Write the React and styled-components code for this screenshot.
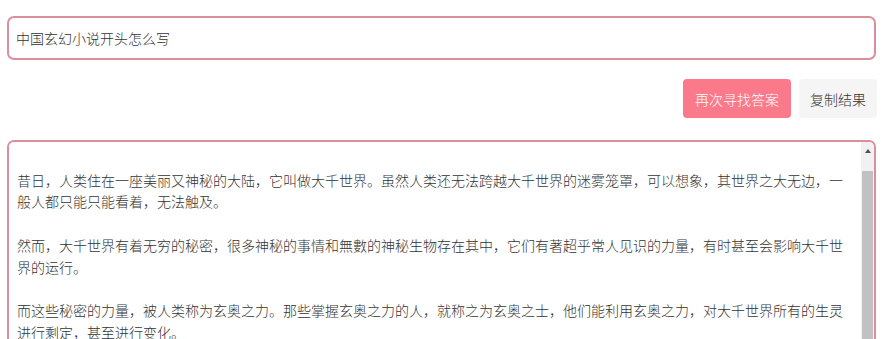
import React from "react";
import styled, { createGlobalStyle } from "styled-components";

const GlobalStyle = createGlobalStyle`
  html, body {
    margin: 0;
    padding: 0;
    background: #ffffff;
    overflow: hidden;
  }
  body {
    font-family: "Noto Sans CJK SC", "Noto Sans", sans-serif;
    color: #333333;
  }
`;

const Page = styled.div`
  display: flex;
  flex-direction: column;
  padding: 16px 15px 0 7px;
`;

const QuestionInput = styled.input`
  box-sizing: border-box;
  width: 100%;
  height: 44px;
  padding: 0 7px;
  border: 2px solid #dc8f9b;
  border-radius: 7px;
  outline: none;
  font-family: "Noto Sans CJK SC", sans-serif;
  font-size: 14px;
  font-weight: 300;
  color: #333333;
  background: #ffffff;
`;

const Actions = styled.div`
  display: flex;
  justify-content: flex-end;
  gap: 8px;
  margin-top: 19px;
  margin-right: -1px;
`;

const Button = styled.button`
  box-sizing: border-box;
  height: 39px;
  border: none;
  border-radius: 4px;
  font-family: "Noto Sans CJK SC", sans-serif;
  font-size: 14px;
  font-weight: 300;
  cursor: pointer;
  background: ${(p) => (p.$primary ? "#fa7a8b" : "#f5f5f5")};
  color: ${(p) => (p.$primary ? "#ffffff" : "#333333")};
  padding: ${(p) => (p.$primary ? "0 12px" : "0 11px")};
`;

const AnswerBox = styled.div`
  display: flex;
  height: 260px;
  margin-top: 22px;
  border: 2px solid #dc8f9b;
  border-radius: 7px;
  overflow: hidden;
  background: #ffffff;
`;

const Answer = styled.textarea`
  flex: 1;
  box-sizing: border-box;
  min-width: 0;
  height: 100%;
  padding: 6px 8px;
  border: none;
  outline: none;
  resize: none;
  overflow: hidden;
  font-family: "Noto Sans CJK SC", sans-serif;
  font-size: 14px;
  font-weight: 300;
  line-height: 21.7px;
  color: #333333;
  background: #ffffff;
`;

const ScrollTrack = styled.div`
  display: flex;
  flex-direction: column;
  width: 13px;
  background: #f1f1f1;
`;

const ScrollArrow = styled.div`
  display: flex;
  align-items: center;
  justify-content: center;
  height: 17px;

  &::before {
    content: "";
    border-left: 3.5px solid transparent;
    border-right: 3.5px solid transparent;
    border-bottom: 4px solid #505050;
  }
`;

const ScrollThumb = styled.div`
  flex: 1;
  margin: 12px 1px 0 1px;
  background: #c1c1c1;
`;

const answerText = `
昔日，人类住在一座美丽又神秘的大陆，它叫做大千世界。虽然人类还无法跨越大千世界的迷雾笼罩，可以想象，其世界之大无边，一般人都只能只能看着，无法触及。

然而，大千世界有着无穷的秘密，很多神秘的事情和無數的神秘生物存在其中，它们有著超乎常人见识的力量，有时甚至会影响大千世界的运行。

而这些秘密的力量，被人类称为玄奥之力。那些掌握玄奥之力的人，就称之为玄奥之士，他们能利用玄奥之力，对大千世界所有的生灵进行剩定，甚至进行变化。

玄奥之士们在大千世界中游历，寻找着更加强大的力量，也守护着人类的家园。`;

export default function App() {
  return (
    <>
      <GlobalStyle />
      <Page>
        <QuestionInput defaultValue="中国玄幻小说开头怎么写" />
        <Actions>
          <Button $primary>再次寻找答案</Button>
          <Button>复制结果</Button>
        </Actions>
        <AnswerBox>
          <Answer readOnly value={answerText} />
          <ScrollTrack>
            <ScrollArrow />
            <ScrollThumb />
          </ScrollTrack>
        </AnswerBox>
      </Page>
    </>
  );
}
